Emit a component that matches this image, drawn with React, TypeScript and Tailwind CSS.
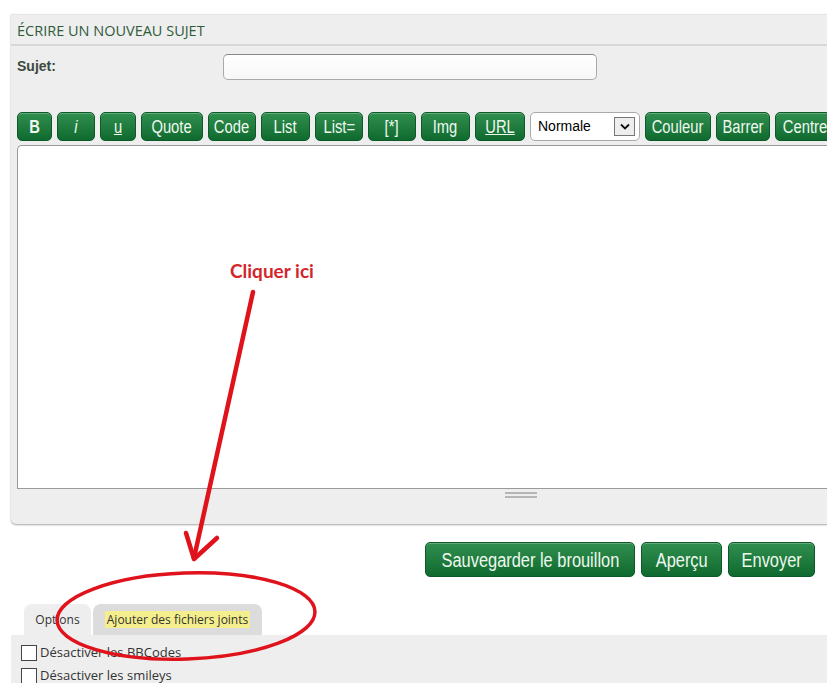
import React from "react";

const arial = { fontFamily: '"Liberation Sans", Arial, sans-serif' };

function GreenBtn({
  w,
  children,
  className,
}: {
  w: string;
  children: React.ReactNode;
  className?: string;
}) {
  return (
    <button
      className={[
        "flex h-[29px] shrink-0 items-center justify-center overflow-hidden rounded-[5px] border border-[#0d5a28] bg-gradient-to-b from-[#2f8f4f] to-[#0f6a2f] text-[18px] leading-none text-[#eef8ee] shadow-[inset_0_1px_0_rgba(255,255,255,0.25)]",
        w,
      ].join(" ")}
      style={arial}
    >
      <span className={["inline-block scale-x-[0.82] whitespace-nowrap", className ?? ""].join(" ")}>{children}</span>
    </button>
  );
}

function BigBtn({ w, children }: { w: string; children: React.ReactNode }) {
  return (
    <button
      className={[
        "flex h-[35px] shrink-0 items-center justify-center rounded-[5px] border border-[#0d5a28] bg-gradient-to-b from-[#2f8f4f] to-[#0f6a2f] text-[20px] leading-none text-[#eef8ee] shadow-[inset_0_1px_0_rgba(255,255,255,0.25)]",
        w,
      ].join(" ")}
      style={arial}
    >
      <span className="inline-block scale-x-[0.82] whitespace-nowrap">{children}</span>
    </button>
  );
}

function Check({ label }: { label: string }) {
  return (
    <label className="flex h-[23px] items-center gap-[3px]">
      <span className="h-[16px] w-[16px] border border-[#444] bg-white" />
      <span className="text-[13px] text-[#333]">{label}</span>
    </label>
  );
}

export default function App() {
  return (
    <div
      className="relative h-[683px] w-full overflow-hidden bg-white"
      style={{ fontFamily: '"Open Sans", "Noto Sans", sans-serif' }}
    >
      <div className="h-[14px]" />
      {/* main panel */}
      <div className="ml-[11px] w-[900px] rounded-bl-[5px] border-t border-[#e6e6e6] bg-[#eeeeee] shadow-[0_1px_2px_rgba(0,0,0,0.35)]">
        <div className="border-b-2 border-[#d8d8d8] px-[6px] pt-[7px] pb-[4px] text-[14.5px] leading-[18px] text-[#2e5b3b]">
          ÉCRIRE UN NOUVEAU SUJET
        </div>
        <div className="flex h-[40px] items-center px-[6px] pt-[1px]">
          <div className="w-[206px] text-[14px] font-bold text-[#3b4a3e]" style={arial}>
            Sujet:
          </div>
          <div className="h-[26px] w-[374px] rounded-[5px] border border-[#aaa] border-t-[#888] bg-gradient-to-b from-white to-[#f7f7f7]" />
        </div>
        <div className="h-[26px]" />
        <div className="flex gap-[5px] px-[6px]">
          <GreenBtn w="w-[35px]" className="font-bold">
            B
          </GreenBtn>
          <GreenBtn w="w-[38px]" className="italic">
            i
          </GreenBtn>
          <GreenBtn w="w-[36px]" className="underline">
            u
          </GreenBtn>
          <GreenBtn w="w-[62px]">Quote</GreenBtn>
          <GreenBtn w="w-[48px]">Code</GreenBtn>
          <GreenBtn w="w-[49px]">List</GreenBtn>
          <GreenBtn w="w-[48px]">List=</GreenBtn>
          <GreenBtn w="w-[48px]">[*]</GreenBtn>
          <GreenBtn w="w-[49px]">Img</GreenBtn>
          <GreenBtn w="w-[50px]" className="underline">
            URL
          </GreenBtn>
          <div
            className="flex h-[29px] w-[110px] shrink-0 items-center justify-between rounded-[5px] border border-[#aaa] bg-white pr-[4px] pl-[7px] text-[14px] text-black"
            style={arial}
          >
            <span>Normale</span>
            <span className="flex h-[19px] w-[21px] items-center justify-center border border-[#777] bg-[#eee]">
              <svg width="10" height="7" viewBox="0 0 10 7">
                <path d="M1 1.5 L5 5.5 L9 1.5" fill="none" stroke="#111" strokeWidth="1.8" />
              </svg>
            </span>
          </div>
          <GreenBtn w="w-[66px]">Couleur</GreenBtn>
          <GreenBtn w="w-[54px]">Barrer</GreenBtn>
          <GreenBtn w="w-[60px]">Centre</GreenBtn>
        </div>
        <div className="h-[4px]" />
        <div className="ml-[6px] h-[344px] rounded-tl-[5px] border border-r-0 border-[#9a9a9a] bg-white" />
        <div className="flex h-[35px] pt-[3px] pl-[494px]">
          <div className="flex h-[6px] w-[32px] flex-col justify-between">
            <div className="h-[2px] bg-[#b5b5b5]" />
            <div className="h-[2px] bg-[#b5b5b5]" />
          </div>
        </div>
      </div>

      {/* submit buttons */}
      <div className="mt-[18px] flex w-[815px] justify-end gap-[6px]">
        <BigBtn w="w-[210px]">Sauvegarder le brouillon</BigBtn>
        <BigBtn w="w-[81px]">Aperçu</BigBtn>
        <BigBtn w="w-[87px]">Envoyer</BigBtn>
      </div>

      {/* tabs */}
      <div className="mt-[27px] flex gap-[2px] pl-[24px]">
        <div className="flex h-[31px] w-[67px] items-center justify-center rounded-t-[8px] bg-[#eeeeee] text-[12px] text-[#333]">
          Options
        </div>
        <div className="flex h-[31px] w-[169px] items-center justify-center rounded-t-[8px] bg-[#dcdcdc] text-[12px] text-[#333]">
          <span className="bg-[#f4ee8c] px-[2px] leading-[17px]">Ajouter des fichiers joints</span>
        </div>
      </div>
      <div className="ml-[11px] w-[900px] bg-[#eeeeee] px-[10px] pt-[6px]">
        <Check label="Désactiver les BBCodes" />
        <Check label="Désactiver les smileys" />
      </div>

      {/* annotation overlay */}
      <div
        className="absolute top-[257px] left-[230px] text-[19px] font-bold text-[#d3262b]"
        style={{ fontFamily: 'Lato, "Open Sans", sans-serif' }}
      >
        Cliquer ici
      </div>
      <svg className="pointer-events-none absolute inset-0" width="827" height="683" viewBox="0 0 827 683">
        <g fill="none" stroke="#e0121c" strokeLinecap="round" strokeLinejoin="round">
          <path d="M253 292 L194 558" strokeWidth="4.5" />
          <path d="M186 533 L194 559 L217 538" strokeWidth="4.5" />
          <ellipse cx="186" cy="616" rx="129" ry="43" transform="rotate(-2 186 616)" strokeWidth="3.5" />
        </g>
      </svg>
    </div>
  );
}
